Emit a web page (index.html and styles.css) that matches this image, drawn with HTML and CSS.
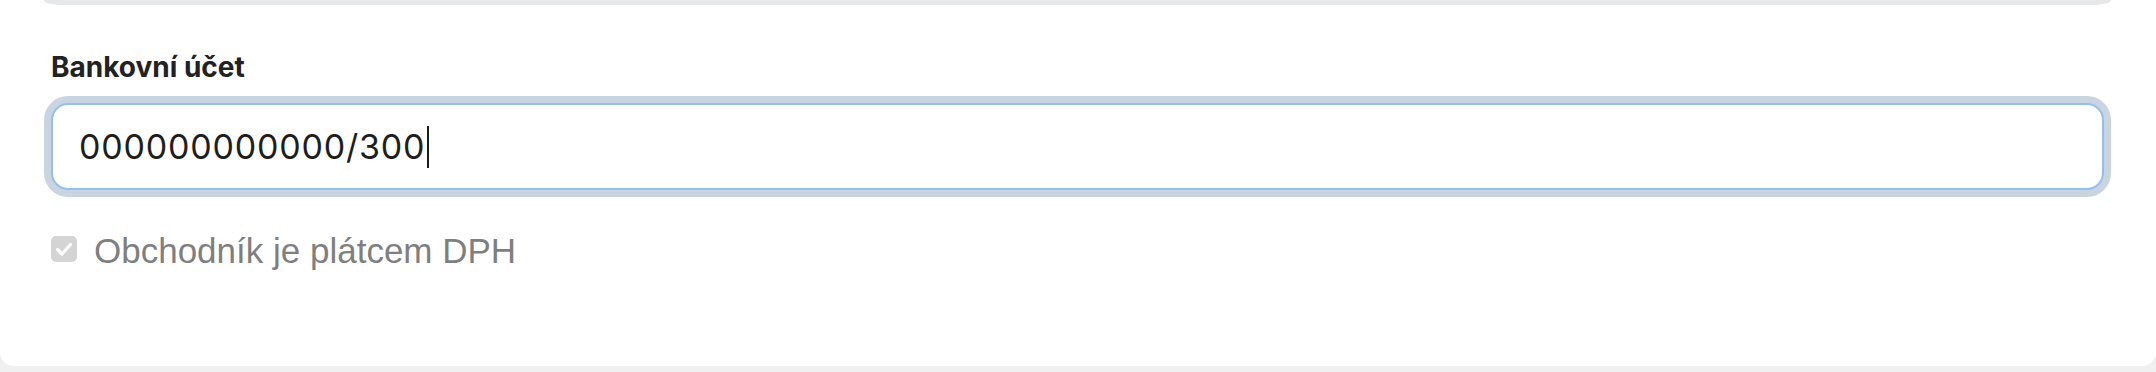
FILE: index.html
```html
<!DOCTYPE html>
<html lang="cs">
<head>
<meta charset="utf-8">
<title>Bankovní účet</title>
<link rel="stylesheet" href="styles.css">
</head>
<body>
<div class="card">
  <div class="prev-field"></div>
  <div class="field">
    <label class="field-label">Bankovní účet</label>
    <div class="text-input is-focused"><span class="value">000000000000/300</span><span class="caret"></span></div>
  </div>
  <div class="check-row">
    <span class="check-box">
      <svg viewBox="0 0 26 26" width="26" height="26" aria-hidden="true"><path d="M6.5 13.5 L11 18 L19.5 8.5" fill="none" stroke="#ffffff" stroke-width="3.2" stroke-linecap="round" stroke-linejoin="round"/></svg>
    </span>
    <span class="check-label">Obchodník je plátcem DPH</span>
  </div>
</div>
</body>
</html>
```
FILE: styles.css
```css
html, body {
  margin: 0;
  padding: 0;
  background: #f0f0f0;
}
.card {
  box-sizing: border-box;
  height: 366px;
  background: #ffffff;
  border-radius: 0 0 14px 14px;
  padding: 0 52px 0 51px;
  display: flex;
  flex-direction: column;
}
.prev-field {
  height: 5px;
  margin: 0 -7px;
  background: #e6e7e9;
  border-radius: 0 0 16px 16px / 0 0 5px 5px;
}
.field {
  display: flex;
  flex-direction: column;
  margin-top: 45px;
}
.field-label {
  font-family: "Inter", "Liberation Sans", sans-serif;
  font-weight: 700;
  font-size: 28px;
  line-height: 34px;
  color: #222222;
}
.text-input {
  box-sizing: border-box;
  margin-top: 19px;
  height: 87px;
  border: 2px solid #93bff5;
  border-radius: 17px;
  box-shadow: 0 0 0 7px #c8d4e0;
  background: #ffffff;
  padding: 0 26px;
  display: flex;
  align-items: center;
  font-family: "Inter", "Liberation Sans", sans-serif;
  font-size: 34px;
  letter-spacing: 0.8px;
  color: #1e1e1e;
}
.caret {
  display: inline-block;
  width: 2px;
  height: 42px;
  background: #1a1a1a;
  margin-left: 2px;
}
.check-row {
  display: flex;
  align-items: flex-start;
  gap: 17px;
  margin-top: 41px;
  height: 40px;
}
.check-box {
  display: flex;
  width: 26px;
  height: 26px;
  margin-top: 5px;
  border-radius: 5px;
  background: #d4d4d4;
}
.check-label {
  font-family: "Liberation Sans", Arial, sans-serif;
  font-size: 35px;
  line-height: 40px;
  color: #7f7f7f;
}
```
